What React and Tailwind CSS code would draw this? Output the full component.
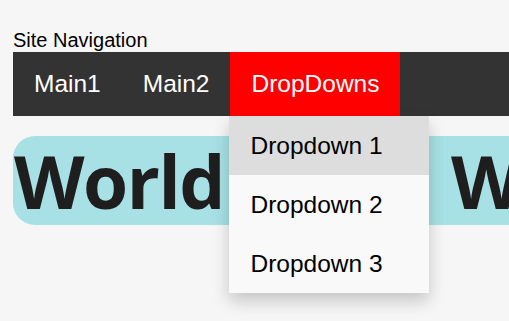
const App = () => {
  const items = ["Dropdown 1", "Dropdown 2", "Dropdown 3"];

  return (
    <div className="w-[509px] h-[321px] overflow-hidden bg-[#f6f6f6] pl-[13px] pt-[29px] font-['Liberation_Sans',Arial,sans-serif]">
      <p className="text-[20px] leading-[23px] text-black">Site Navigation</p>

      <div className="relative flex h-[64px] bg-[#333333] text-white text-[24.5px] leading-[28px]">
        <a className="px-[21px] py-[18px]">Main1</a>
        <a className="px-[21px] py-[18px]">Main2</a>
        <div className="relative">
          <a className="block px-[21px] py-[18px] bg-[#ff0000]">DropDowns</a>
          {/* open menu */}
          <div className="absolute left-[-1px] top-[64px] z-10 w-[200px] bg-[#f9f9f9] shadow-[0_8px_16px_0_rgba(0,0,0,0.2)]">
            {items.map((item, index) => (
              <a
                key={index}
                className={`block px-[21px] py-4 leading-[27px] text-black ${index === 0 ? "bg-[#dddddd]" : ""}`}
              >
                {item}
              </a>
            ))}
          </div>
        </div>
      </div>

      <h1 className="mt-[20px] h-[89px] w-max rounded-[22px] bg-[#a7e1e5] pl-[1px] pr-6 text-[73px] leading-[89px] font-bold tracking-[-1.5px] [word-spacing:8px] text-[#1e1e1e] whitespace-nowrap font-['Open_Sans',sans-serif]">
        World Wide Web
      </h1>
    </div>
  );
};

export default App;
